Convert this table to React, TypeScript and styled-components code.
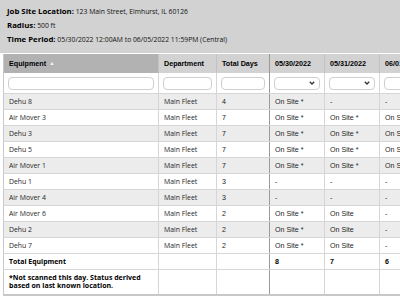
import styled, { createGlobalStyle } from 'styled-components'

const Global = createGlobalStyle`
  html, body {
    margin: 0;
    padding: 0;
    background: #ffffff;
    overflow: hidden;
  }
`

const Page = styled.div`
  width: 400px;
  height: 300px;
  overflow: hidden;
  background: #ffffff;
`

const Info = styled.div`
  background: #d2d2d2;
  padding: 4px 7px 0;
  height: 49px;
  display: grid;
  grid-auto-rows: 14px;
  align-content: start;
  font-family: 'Open Sans', sans-serif;
  color: #111;
`

const InfoLine = styled.div`
  white-space: nowrap;
  font-size: 6.8px;
  line-height: 14px;

  & b {
    font-size: 7.8px;
    font-weight: 700;
    color: #000;
  }
`

const TableWrap = styled.div`
  padding: 1px 0 0 3px;
`

const Table = styled.table`
  border-collapse: collapse;
  table-layout: fixed;
  width: 441px;
  font-family: 'Liberation Sans', Arial, sans-serif;
  color: #111;
  border-left: 1px solid #c8c8c8;
  border-bottom: 2px solid #c8c8c8;
`

const Th = styled.th<{ $dark?: boolean; $split?: boolean }>`
  height: 19px;
  padding: 0 0 0 5px;
  text-align: left;
  font-weight: 700;
  font-size: 7.2px;
  color: #000;
  background: ${(p) => (p.$dark ? '#b2b2b2' : '#d2d2d2')};
  border-right: ${(p) => (p.$split ? '1px solid #9a9a9a' : '1px solid #c2c2c2')};
  white-space: nowrap;
  overflow: hidden;
`

const SortMark = styled.span`
  color: #f2f2f2;
  font-size: 5.5px;
  margin-left: 3px;
  vertical-align: 1px;
`

const FilterCell = styled.td<{ $split?: boolean }>`
  height: 20px;
  padding: 0 4px;
  background: #ffffff;
  border-right: ${(p) => (p.$split ? '1px solid #9a9a9a' : '1px solid #d6d6d6')};
  border-bottom: 1px solid #d6d6d6;
`

const FilterInput = styled.div`
  height: 11px;
  border: 1px solid #cfcfcf;
  border-radius: 4px;
  background: #ffffff;
  display: flex;
  align-items: center;
  justify-content: flex-end;
  padding-right: 4px;
`

const Row = styled.tr<{ $alt?: boolean }>`
  background: ${(p) => (p.$alt ? '#ececec' : '#ffffff')};
`

const Td = styled.td<{ $open?: boolean; $split?: boolean; $bold?: boolean }>`
  height: 15px;
  padding: 0 0 0 5px;
  border-right: ${(p) => (p.$split ? '1px solid #9a9a9a' : '1px solid #d6d6d6')};
  border-bottom: 1px solid #d6d6d6;
  font-family: ${(p) => (p.$open ? "'Open Sans', sans-serif" : "'Liberation Sans', Arial, sans-serif")};
  font-size: ${(p) => (p.$open ? '6.9px' : '7.1px')};
  font-weight: ${(p) => (p.$bold ? 700 : 400)};
  color: ${(p) => (p.$bold ? '#000' : '#1e1e1e')};
  white-space: nowrap;
  overflow: hidden;
`

const NoteCell = styled.td`
  height: 24px;
  padding: 0 0 0 5px;
  border-right: 1px solid #d6d6d6;
  font-family: 'Open Sans', sans-serif;
  font-size: 7px;
  line-height: 8px;
  font-weight: 700;
  color: #000;
  white-space: nowrap;
  vertical-align: middle;
`

const EmptyCell = styled.td<{ $split?: boolean }>`
  border-right: ${(p) => (p.$split ? '1px solid #9a9a9a' : '1px solid #d6d6d6')};
`

const Chevron = () => (
  <svg width="6" height="4" viewBox="0 0 6 4">
    <path d="M0.8 0.8 L3 3 L5.2 0.8" fill="none" stroke="#333" strokeWidth="1.3" />
  </svg>
)

const dates = ['05/30/2022', '05/31/2022', '06/01/2022']

const rows: [string, string, string, string, string][] = [
  ['Dehu 8', '4', 'On Site *', '-', '-'],
  ['Air Mover 3', '7', 'On Site *', 'On Site *', 'On Site *'],
  ['Dehu 3', '7', 'On Site *', 'On Site *', 'On Site *'],
  ['Dehu 5', '7', 'On Site *', 'On Site *', 'On Site *'],
  ['Air Mover 1', '7', 'On Site *', 'On Site *', 'On Site *'],
  ['Dehu 1', '3', '-', '-', '-'],
  ['Air Mover 4', '3', '-', '-', '-'],
  ['Air Mover 6', '2', 'On Site *', 'On Site', '-'],
  ['Dehu 2', '2', 'On Site *', 'On Site', '-'],
  ['Dehu 7', '2', 'On Site *', 'On Site', '-'],
]

export default function App() {
  return (
    <Page>
      <Global />
      <Info>
        <InfoLine>
          <b>Job Site Location:</b> 123 Main Street, Elmhurst, IL 60126
        </InfoLine>
        <InfoLine>
          <b>Radius:</b> 500 ft
        </InfoLine>
        <InfoLine>
          <b>Time Period:</b> 05/30/2022 12:00AM to 06/05/2022 11:59PM (Central)
        </InfoLine>
      </Info>
      <TableWrap>
        <Table>
          <colgroup>
            <col style={{ width: 155 }} />
            <col style={{ width: 58 }} />
            <col style={{ width: 53 }} />
            <col style={{ width: 55 }} />
            <col style={{ width: 55 }} />
            <col style={{ width: 65 }} />
          </colgroup>
          <thead>
            <tr>
              <Th $dark>
                Equipment<SortMark>▲</SortMark>
              </Th>
              <Th>Department</Th>
              <Th $split>Total Days</Th>
              {dates.map((d) => (
                <Th key={d}>{d}</Th>
              ))}
            </tr>
            <tr>
              <FilterCell>
                <FilterInput />
              </FilterCell>
              <FilterCell>
                <FilterInput />
              </FilterCell>
              <FilterCell $split>
                <FilterInput />
              </FilterCell>
              {dates.map((d) => (
                <FilterCell key={d}>
                  <FilterInput>
                    <Chevron />
                  </FilterInput>
                </FilterCell>
              ))}
            </tr>
          </thead>
          <tbody>
            {rows.map(([name, days, a, b, c], i) => (
              <Row key={name} $alt={i % 2 === 0}>
                <Td $open>{name}</Td>
                <Td $open>Main Fleet</Td>
                <Td $split>{days}</Td>
                <Td>{a}</Td>
                <Td>{b}</Td>
                <Td>{c}</Td>
              </Row>
            ))}
            <Row>
              <Td $open $bold>
                Total Equipment
              </Td>
              <Td />
              <Td $split />
              <Td $bold>8</Td>
              <Td $bold>7</Td>
              <Td $bold>6</Td>
            </Row>
            <tr>
              <NoteCell>
                *Not scanned this day. Status derived
                <br />
                based on last known location.
              </NoteCell>
              <EmptyCell />
              <EmptyCell $split />
              <EmptyCell />
              <EmptyCell />
              <EmptyCell />
            </tr>
          </tbody>
        </Table>
      </TableWrap>
    </Page>
  )
}
